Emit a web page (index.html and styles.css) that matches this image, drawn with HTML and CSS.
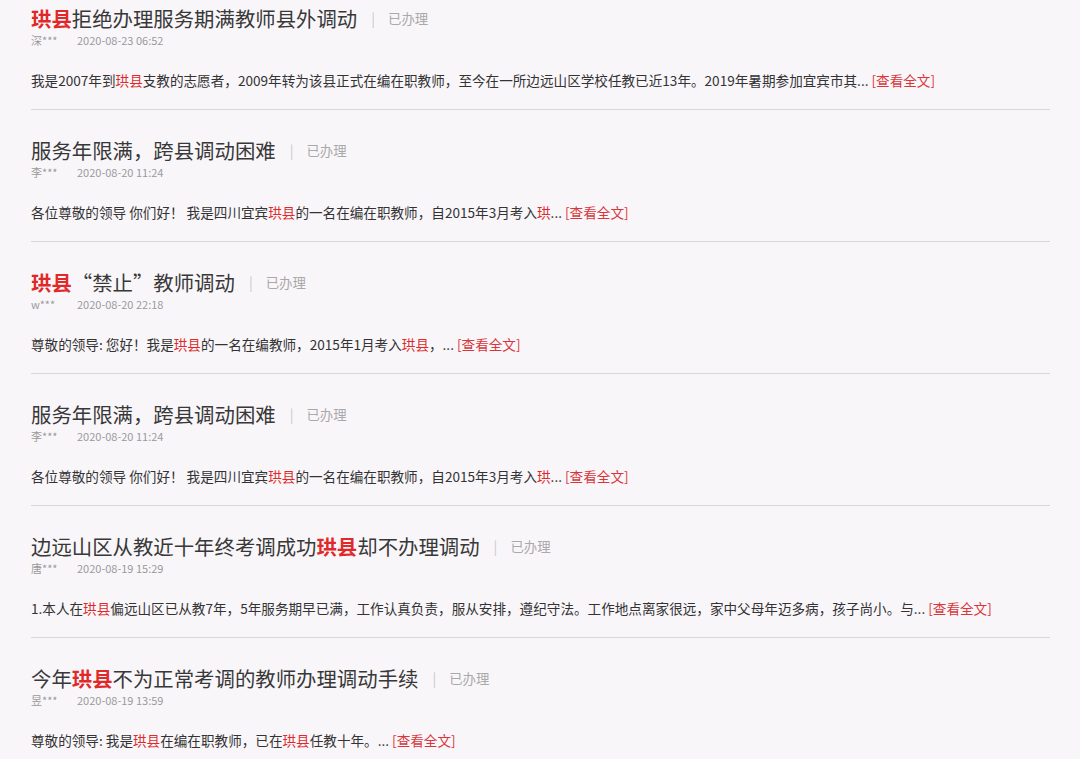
FILE: index.html
```html
<!DOCTYPE html>
<html lang="zh-CN">
<head>
<meta charset="utf-8">
<link rel="stylesheet" href="styles.css">
</head>
<body>
<div class="list">
  <div class="item">
    <div class="title"><span class="hl">珙县</span>拒绝办理服务期满教师县外调动<span class="sep">|</span><span class="status">已办理</span></div>
    <div class="meta"><span class="name">深***</span><span class="date">2020-08-23 06:52</span></div>
    <div class="excerpt">我是2007年到<span class="hl">珙县</span>支教的志愿者，2009年转为该县正式在编在职教师，至今在一所边远山区学校任教已近13年。2019年暑期参加宜宾市其... <span class="more">[查看全文]</span></div>
  </div>
  <div class="item">
    <div class="title">服务年限满，跨县调动困难<span class="sep">|</span><span class="status">已办理</span></div>
    <div class="meta"><span class="name">李***</span><span class="date">2020-08-20 11:24</span></div>
    <div class="excerpt">各位尊敬的领导 你们好！ 我是四川宜宾<span class="hl">珙县</span>的一名在编在职教师，自2015年3月考入<span class="hl">珙</span>... <span class="more">[查看全文]</span></div>
  </div>
  <div class="item">
    <div class="title"><span class="hl">珙县</span>“禁止”教师调动<span class="sep">|</span><span class="status">已办理</span></div>
    <div class="meta"><span class="name">w***</span><span class="date">2020-08-20 22:18</span></div>
    <div class="excerpt">尊敬的领导: 您好！我是<span class="hl">珙县</span>的一名在编教师，2015年1月考入<span class="hl">珙县</span>，... <span class="more">[查看全文]</span></div>
  </div>
  <div class="item">
    <div class="title">服务年限满，跨县调动困难<span class="sep">|</span><span class="status">已办理</span></div>
    <div class="meta"><span class="name">李***</span><span class="date">2020-08-20 11:24</span></div>
    <div class="excerpt">各位尊敬的领导 你们好！ 我是四川宜宾<span class="hl">珙县</span>的一名在编在职教师，自2015年3月考入<span class="hl">珙</span>... <span class="more">[查看全文]</span></div>
  </div>
  <div class="item">
    <div class="title">边远山区从教近十年终考调成功<span class="hl">珙县</span>却不办理调动<span class="sep">|</span><span class="status">已办理</span></div>
    <div class="meta"><span class="name">唐***</span><span class="date">2020-08-19 15:29</span></div>
    <div class="excerpt">1.本人在<span class="hl">珙县</span>偏远山区已从教7年，5年服务期早已满，工作认真负责，服从安排，遵纪守法。工作地点离家很远，家中父母年迈多病，孩子尚小。与... <span class="more">[查看全文]</span></div>
  </div>
  <div class="item">
    <div class="title">今年<span class="hl">珙县</span>不为正常考调的教师办理调动手续<span class="sep">|</span><span class="status">已办理</span></div>
    <div class="meta"><span class="name">昱***</span><span class="date">2020-08-19 13:59</span></div>
    <div class="excerpt">尊敬的领导: 我是<span class="hl">珙县</span>在编在职教师，已在<span class="hl">珙县</span>任教十年。... <span class="more">[查看全文]</span></div>
  </div>
</div>
</body>
</html>
```

FILE: styles.css
```css
html, body {
  margin: 0;
  padding: 0;
  background: #f9f6fa;
}
body {
  font-family: "Noto Sans CJK SC", "Noto Sans", sans-serif;
  color: #333;
  overflow: hidden;
}
.list {
  padding: 0 30px 0 31px;
}
.item {
  padding: 28px 0 19px;
  border-bottom: 1px solid #d9d5da;
}
.item:first-child {
  padding-top: 6px;
}
.title {
  display: flex;
  align-items: center;
  font-size: 20.4px;
  line-height: 24px;
  height: 24px;
  color: #383838;
  white-space: nowrap;
}
.title .hl {
  color: #e02a2a;
  font-weight: 700;
}
.sep {
  font-size: 14px;
  color: #c8c8c8;
  margin: 0 13px 0 14px;
}
.status {
  font-size: 13.4px;
  color: #a9a9a9;
}
.meta {
  margin-top: 3px;
  display: flex;
  font-size: 11px;
  line-height: 14px;
  height: 14px;
  color: #9a9a9a;
}
.name {
  width: 46px;
}
.excerpt {
  margin-top: 23px;
  font-size: 13.6px;
  line-height: 20px;
  height: 20px;
  color: #333;
  white-space: nowrap;
}
.hl {
  color: #e02a2a;
}
.more {
  color: #d9363a;
}
```
